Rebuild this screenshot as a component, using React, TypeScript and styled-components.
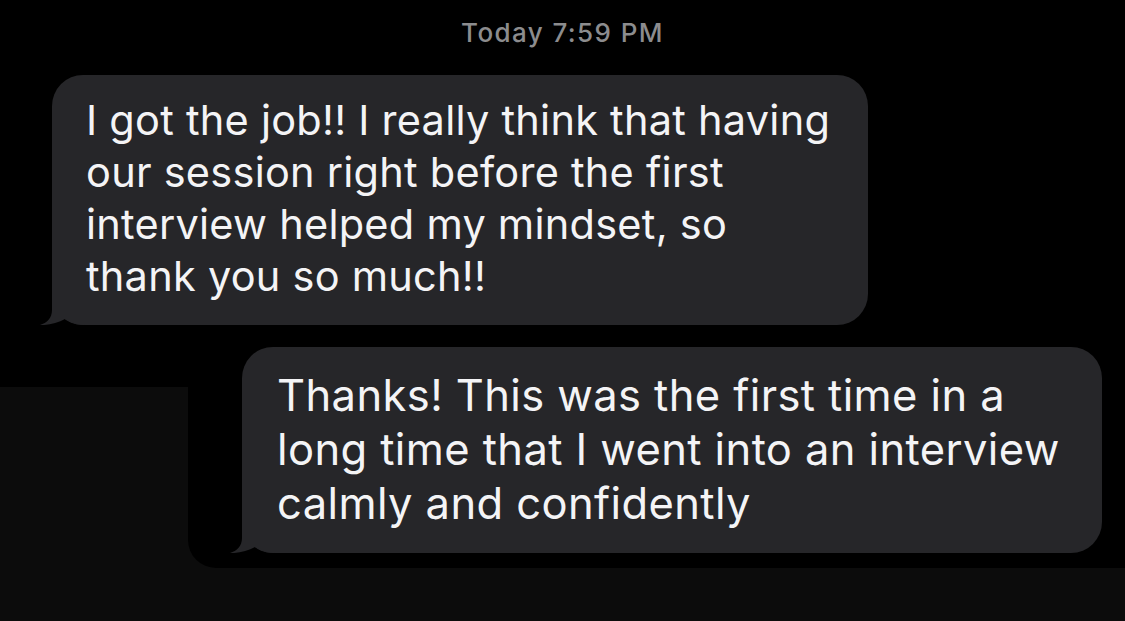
import styled, { createGlobalStyle } from 'styled-components';

const GlobalStyle = createGlobalStyle`
  html, body {
    margin: 0;
    padding: 0;
    background: #000;
  }
  * {
    box-sizing: border-box;
  }
`;

const BUBBLE = '#262629';

/** Whole screenshot area */
const Page = styled.main`
  width: 1125px;
  height: 621px;
  overflow: hidden;
  display: flex;
  flex-direction: column;
  background: #000;
  font-family: Inter, "Noto Sans", "Liberation Sans", sans-serif;
  -webkit-font-smoothing: antialiased;
`;

const Stamp = styled.header`
  height: 75px;
  padding-top: 16px;
  text-align: center;
  font-size: 26px;
  line-height: 34px;
  font-weight: 500;
  letter-spacing: 1.4px;
  color: #8c8c8e;
`;

const Row = styled.section<{ inset: number }>`
  display: flex;
  padding-left: ${({ inset }) => inset}px;
`;

type BubbleLook = {
  width: number;
  size: number;
  lead: number;
  track: number;
  pad: string;
};

const Bubble = styled.div<{ look: BubbleLook }>`
  position: relative;
  width: ${({ look }) => look.width}px;
  padding: ${({ look }) => look.pad};
  background: ${BUBBLE};
  border-radius: 31px;
  color: #f4f4f6;
  font-size: ${({ look }) => look.size}px;
  line-height: ${({ look }) => look.lead}px;
  letter-spacing: ${({ look }) => look.track}px;
`;

const Line = styled.div`
  white-space: nowrap;
`;

const TailSvg = styled.svg`
  position: absolute;
  left: -12px;
  bottom: 0;
  width: 46px;
  height: 36px;
`;

/** iMessage-style tail hanging from the bubble's lower left corner */
const Tail = () => (
  <TailSvg viewBox="-12 -36 46 36">
    <path
      d="M0 -36 L0 -15 C0 -7 -5 -2 -12 0 C-4 0.5 6 -2 13 -6 C19 -2 26 0 34 0 L34 -36 Z"
      fill={BUBBLE}
    />
  </TailSvg>
);

const Gap = styled.div`
  height: 22px;
  flex: none;
`;

/** Lower part: the second bubble sits on its own black plate */
const Lower = styled.section`
  flex: 1;
  background: linear-gradient(to bottom, #000 40px, #0c0c0c 40px);
`;

const Plate = styled.div`
  margin-left: 188px;
  padding: 0 23px 15px 54px;
  background: #000;
  border-bottom-left-radius: 28px;
`;

type Message = { lines: string[]; look: BubbleLook };

const first: Message = {
  lines: [
    'I got the job!! I really think that having',
    'our session right before the first',
    'interview helped my mindset, so',
    'thank you so much!!',
  ],
  look: { width: 816, size: 41.5, lead: 52, track: 0.25, pad: '19px 0 23px 34px' },
};

// the second bubble was pasted in at a slightly larger scale
const second: Message = {
  lines: [
    'Thanks! This was the first time in a',
    'long time that I went into an interview',
    'calmly and confidently',
  ],
  look: { width: 860, size: 43.5, lead: 54, track: 0.4, pad: '21px 0 23px 35px' },
};

const MessageBubble = ({ msg }: { msg: Message }) => (
  <Bubble look={msg.look}>
    <Tail />
    {msg.lines.map((l) => (
      <Line key={l}>{l}</Line>
    ))}
  </Bubble>
);

export default function App() {
  return (
    <>
      <GlobalStyle />
      <Page>
        <Stamp>Today 7:59 PM</Stamp>
        <Row inset={52}>
          <MessageBubble msg={first} />
        </Row>
        <Gap />
        <Lower>
          <Plate>
            <MessageBubble msg={second} />
          </Plate>
        </Lower>
      </Page>
    </>
  );
}
